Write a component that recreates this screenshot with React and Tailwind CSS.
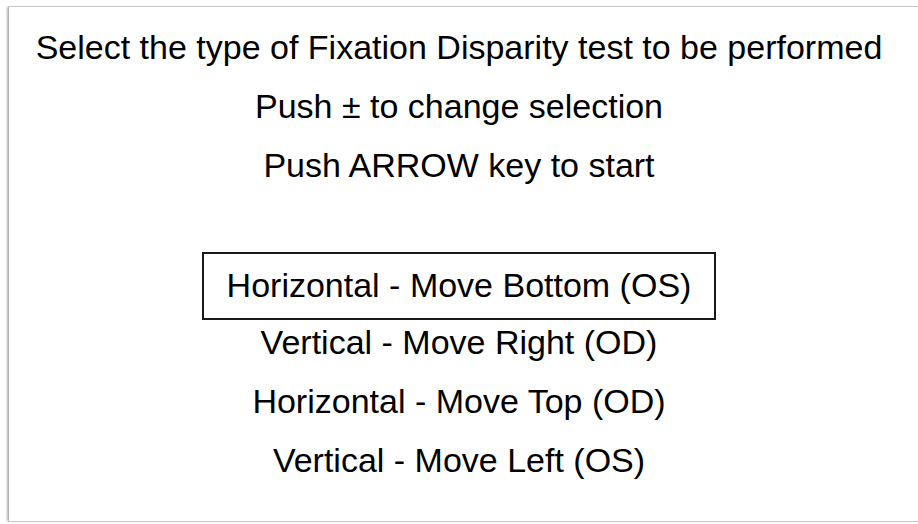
const options = [
  "Horizontal - Move Bottom (OS)",
  "Vertical - Move Right (OD)",
  "Horizontal - Move Top (OD)",
  "Vertical - Move Left (OS)",
];

const Line = ({ children }) => (
  <div className="h-[59px] flex items-center justify-center whitespace-nowrap">
    {children}
  </div>
);

export default function App() {
  const selected = 0;

  return (
    <div className="w-full h-[524px] overflow-hidden bg-white pt-[6px] pl-[8px]">
      <div
        className="w-[910px] h-[516px] border-t border-l border-b border-[#c9c9c9] border-l-[#b5b5b5] bg-white shadow-[-2px_0_2px_-1px_rgba(0,0,0,0.3)] text-black text-[34px]"
        style={{ fontFamily: '"Liberation Sans", Arial, sans-serif' }}
      >
        <div className="w-[900px] pt-[11px] flex flex-col">
          <Line>Select the type of Fixation Disparity test to be performed</Line>
          <Line>Push ± to change selection</Line>
          <Line>Push ARROW key to start</Line>
          <Line />
          {options.map((label, i) =>
            i === selected ? (
              <Line key={label}>
                <span className="mt-[4px] h-[68px] w-[514px] flex items-center justify-center border-2 border-[#1a1a1a]">
                  {label}
                </span>
              </Line>
            ) : (
              <Line key={label}>{label}</Line>
            )
          )}
        </div>
      </div>
    </div>
  );
}
